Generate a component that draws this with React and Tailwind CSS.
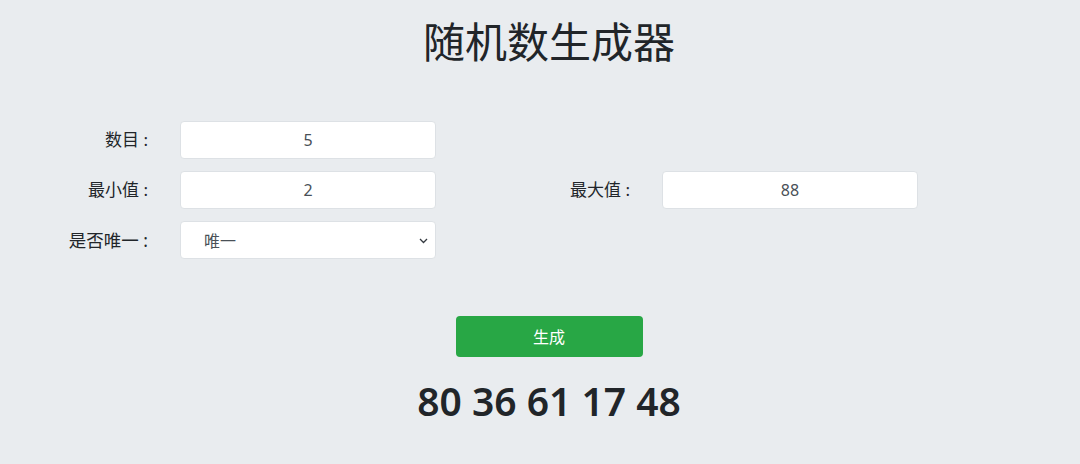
const font = {
  fontFamily: '"Noto Sans", "Noto Sans CJK SC", sans-serif',
};

const Field = ({ value }) => (
  <input
    readOnly
    value={value}
    className="ml-8 h-[38px] w-[256px] rounded border border-[#dde1e5] bg-white text-center text-base text-[#495057] outline-none"
  />
);

const App = () => {
  const numbers = [80, 36, 61, 17, 48];

  return (
    <div
      className="flex h-[464px] w-[1080px] flex-col bg-[#e9ecef] text-[#212529]"
      style={font}
    >
      <h1 className="mt-[14px] pl-[18px] text-center text-[42px] leading-[56px] font-normal">
        随机数生成器
      </h1>

      <div className="mt-[51px] flex flex-col gap-3">
        {/* 数目 */}
        <div className="flex items-center">
          <label className="w-[148px] text-right text-[17px]">数目 :</label>
          <Field value="5" />
        </div>

        {/* 最小值 / 最大值 */}
        <div className="flex items-center">
          <label className="w-[148px] text-right text-[17px]">最小值 :</label>
          <Field value="2" />
          <label className="w-[194px] text-right text-[17px]">最大值 :</label>
          <Field value="88" />
        </div>

        {/* 是否唯一 */}
        <div className="flex items-center">
          <label className="w-[148px] text-right text-[17.5px]">是否唯一 :</label>
          <div className="relative ml-8 h-[38px] w-[256px] rounded border border-[#dde1e5] bg-white">
            <span className="absolute top-[7px] left-[23px] text-base text-[#495057]">
              唯一
            </span>
            <svg
              className="absolute top-[15px] right-[7px]"
              width="9"
              height="7"
              viewBox="0 0 9 7"
              fill="none"
              stroke="#343a40"
              strokeWidth="1.3"
            >
              <path d="M1 2l3.5 3.5L8 2" />
            </svg>
          </div>
        </div>
      </div>

      <div className="mt-[57px] flex justify-center pl-[18px]">
        <button className="h-[41px] w-[187px] rounded bg-[#28a745] text-base text-white">
          生成
        </button>
      </div>

      <div className="mt-[16px] pl-[18px] text-center text-[39px] leading-[56px] font-semibold">
        {numbers.join(" ")}
      </div>
    </div>
  );
};

export default App;
